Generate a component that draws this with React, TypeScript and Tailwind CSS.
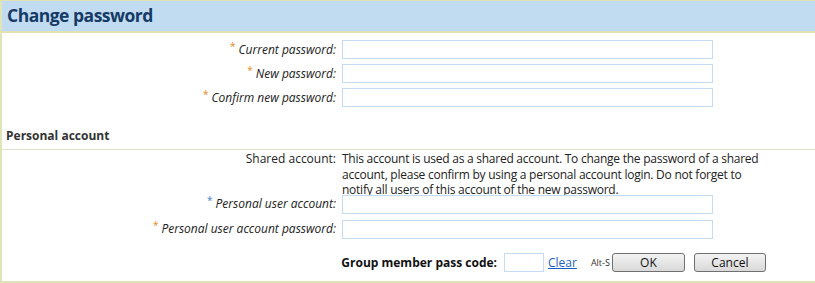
import React from "react";

const font = { fontFamily: '"Open Sans", "Noto Sans", "Liberation Sans", sans-serif' };

function Star({ blue }: { blue?: boolean }) {
  return (
    <span className={`relative top-[-4px] mr-[3px] text-[10px] not-italic ${blue ? "text-[#3d7fd6]" : "text-[#e98a25]"}`}>*</span>
  );
}

function FieldRow({ label, blue, className = "" }: { label: string; blue?: boolean; className?: string }) {
  return (
    <div className={`flex items-center h-[19px] ${className}`}>
      <div className="w-[334px] shrink-0 text-right italic text-[12px] text-[#222] leading-none whitespace-nowrap">
        <Star blue={blue} />
        {label}
      </div>
      <div className="ml-[6px] w-[371px] h-[19px] border border-[#c5daf5] bg-white" />
    </div>
  );
}

export default function App() {
  return (
    <div className="w-[815px] h-[283px] bg-white border-l-2 border-b-2 border-[#dfe5b9] overflow-hidden" style={font}>
      <div className="h-[33px] bg-[#c1dcf1] border-t border-b-2 border-[#e3e2b5] flex items-center pl-[5px]">
        <span className="text-[17.5px] font-bold text-[#163a66] leading-none tracking-[-0.5px]">Change password</span>
      </div>
      <div className="pt-[7px]">
        <FieldRow label="Current password:" />
        <FieldRow label="New password:" className="mt-[5px]" />
        <FieldRow label="Confirm new password:" className="mt-[5px]" />
      </div>
      <div className="mt-[23px] pl-[4px] text-[12px] font-bold text-[#333] leading-none h-[16px]">Personal account</div>
      <div className="mt-[3px] border-t border-[#dfe2cf]" />
      <div className="flex mt-[1px] text-[12px] text-[#222] leading-[15.5px]">
        <div className="w-[334px] shrink-0 text-right">Shared account:</div>
        <div className="ml-[6px] w-[425px] tracking-[-0.25px]">
          This account is used as a shared account. To change the password of a shared account, please confirm by using a personal account login. Do not forget to notify all users of this account of the new password.
        </div>
      </div>
      <div className="mt-[-3px]">
        <FieldRow label="Personal user account:" blue />
        <FieldRow label="Personal user account password:" className="mt-[6px]" />
      </div>
      <div className="flex items-center mt-[14px] h-[20px]">
        <div className="w-[495px] shrink-0 text-right text-[12px] font-bold text-[#111]">Group member pass code:</div>
        <div className="ml-[7px] w-[40px] h-[19px] border border-[#c5daf5] bg-white" />
        <span className="ml-[4px] text-[12px] text-[#1a5fc4] underline">Clear</span>
        <span className="ml-[14px] text-[9px] text-[#333]">Alt-S</span>
        <button className="ml-[2px] w-[73px] h-[19px] rounded-[3px] border border-[#707070] bg-gradient-to-b from-[#f3f3f3] to-[#d9d9d9] text-[12px] text-[#111] leading-none">OK</button>
        <button className="ml-[9px] w-[72px] h-[19px] rounded-[3px] border border-[#707070] bg-gradient-to-b from-[#f3f3f3] to-[#d9d9d9] text-[12px] text-[#111] leading-none">Cancel</button>
      </div>
    </div>
  );
}
